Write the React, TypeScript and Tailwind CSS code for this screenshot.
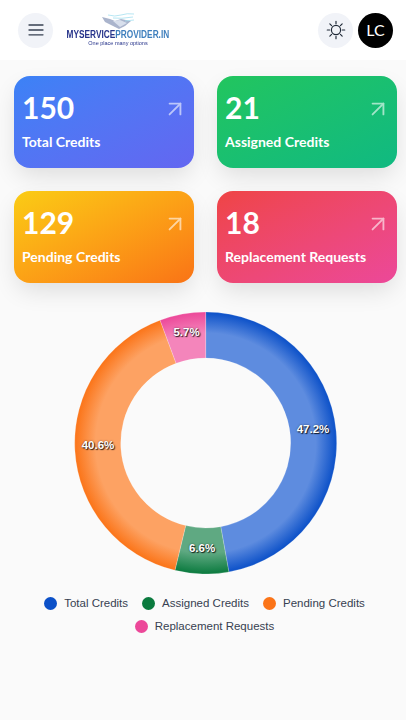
import React from 'react'
import { ArrowUpRight } from 'lucide-react'

const cards = [
  { value: '150', label: 'Total Credits', bg: 'bg-gradient-to-br from-[#3b82f6] to-[#6366f1]' },
  { value: '21', label: 'Assigned Credits', bg: 'bg-gradient-to-br from-[#22c55e] to-[#10b981]' },
  { value: '129', label: 'Pending Credits', bg: 'bg-gradient-to-br from-[#facc15] to-[#f97316]' },
  { value: '18', label: 'Replacement Requests', bg: 'bg-gradient-to-br from-[#ef4444] to-[#ec4899]' },
]

const slices = [
  { id: 'blue', color: '#0b50c8', light: '#5e8cdf', value: 150, pct: '47.2%', lx: 313, ly: 429 },
  { id: 'green', color: '#0a7a3e', light: '#5fa982', value: 21, pct: '6.6%', lx: 202, ly: 548 },
  { id: 'orange', color: '#fb7418', light: '#fda263', value: 129, pct: '40.6%', lx: 98, ly: 445 },
  { id: 'pink', color: '#ec4899', light: '#f485bb', value: 18, pct: '5.7%', lx: 186.5, ly: 332 },
]

const legend = [
  { label: 'Total Credits', color: 'bg-[#0b50c8]' },
  { label: 'Assigned Credits', color: 'bg-[#0a7a3e]' },
  { label: 'Pending Credits', color: 'bg-[#fb7418]' },
  { label: 'Replacement Requests', color: 'bg-[#ec4899]' },
]

// center of the ring inside the 290x264 svg
const cx = 145.7
const cy = 133
const outer = 131
const inner = 85

function arc(start: number, end: number) {
  const pt = (r: number, a: number) => {
    const rad = ((a - 90) * Math.PI) / 180
    return `${(cx + r * Math.cos(rad)).toFixed(2)} ${(cy + r * Math.sin(rad)).toFixed(2)}`
  }
  const large = end - start > 180 ? 1 : 0
  return `M${pt(outer, start)} A${outer} ${outer} 0 ${large} 1 ${pt(outer, end)} L${pt(inner, end)} A${inner} ${inner} 0 ${large} 0 ${pt(inner, start)} Z`
}

const Donut = () => {
  const total = slices.reduce((s, x) => s + x.value, 0)
  let angle = 0
  return (
    <svg width="290" height="264" viewBox="0 0 290 264" className="block">
      <defs>
        {slices.map((s) => (
          <radialGradient key={s.id} id={s.id} gradientUnits="userSpaceOnUse" cx={cx} cy={cy} r={outer}>
            <stop offset="0.65" stopColor={s.light} />
            <stop offset="0.84" stopColor={s.light} />
            <stop offset="1" stopColor={s.color} />
          </radialGradient>
        ))}
      </defs>
      {slices.map((s) => {
        const start = angle
        angle += (s.value / total) * 360
        return <path key={s.id} d={arc(start, angle)} fill={`url(#${s.id})`} stroke="#ffffff" strokeOpacity="0.4" strokeWidth="0.5" />
      })}
      {slices.map((s) => (
        <text
          key={s.id}
          x={s.lx - 60}
          y={s.ly - 310 + 4}
          textAnchor="middle"
          fill="#ffffff"
          fontSize="11.5"
          fontWeight="700"
          fontFamily="'Liberation Sans', sans-serif"
          style={{ textShadow: '1px 1px 1px rgba(0,0,0,0.8), 0 0 2px rgba(0,0,0,0.5)' }}
        >
          {s.pct}
        </text>
      ))}
    </svg>
  )
}

const Hamburger = () => (
  <svg width="16" height="12" viewBox="0 0 16 12" fill="none" stroke="#374151" strokeWidth="1.3" strokeLinecap="round">
    <path d="M1 1h14M1 6h14M1 10.8h14" />
  </svg>
)

const Sun = () => (
  <svg width="20" height="20" viewBox="0 0 24 24" fill="none" stroke="#1f2937" strokeWidth="1.4" strokeLinecap="round">
    <circle cx="12" cy="12" r="5.5" />
    <path d="M12 1.5v3M12 19.5v3M1.5 12h3M19.5 12h3M4.6 4.6l2.1 2.1M17.3 17.3l2.1 2.1M4.6 19.4l2.1-2.1M17.3 6.7l2.1-2.1" />
  </svg>
)

const Logo = () => (
  <div className="flex flex-col items-center w-[104px] blur-[0.3px]">
    <svg width="34" height="16" viewBox="0 0 34 16" className="mb-[1px]">
      <path d="M1 4 L9 6 L14 8 L20 6 L30 8 L24 13 L18 16 L12 13 L4 9 Z" fill="#aab4cc" />
      <path d="M12 8 L19 7 L26 10 L19 14 Z" fill="#d8dfec" />
      <path d="M7 2 Q14 4 20 2 T33 1 M12 5 Q20 6 32 4 M24 8 L33 7" stroke="#a5dff0" strokeWidth="0.8" fill="none" />
    </svg>
    <div className="font-['Liberation_Sans',sans-serif] font-bold text-[10px] leading-[10px] scale-x-[0.83] whitespace-nowrap">
      <span className="text-[#27348b]">MYSERVICE</span>
      <span className="text-[#3f7fbd]">PROVIDER.IN</span>
    </div>
    <div className="font-['Liberation_Sans',sans-serif] text-[5.5px] leading-[7px] text-[#27348b] whitespace-nowrap">One place many options</div>
  </div>
)

const App = () => {
  return (
    <div className="w-[406px] h-[720px] bg-[#fafafa] overflow-hidden font-['Lato',sans-serif]">
      <header className="h-[60px] bg-white flex items-center justify-between pl-[18px] pr-[13px]">
        <div className="flex items-center gap-[13px]">
          <button className="w-[35px] h-[35px] rounded-full bg-[#f1f3f8] flex items-center justify-center">
            <Hamburger />
          </button>
          <Logo />
        </div>
        <div className="flex items-center gap-[5px]">
          <button className="w-[35px] h-[35px] rounded-full bg-[#f1f3f8] flex items-center justify-center">
            <Sun />
          </button>
          <div className="w-[35px] h-[35px] rounded-full bg-black text-white flex items-center justify-center text-[16px]">
            LC
          </div>
        </div>
      </header>

      <main className="pt-4">
        <div className="grid grid-cols-[180px_180px] gap-x-[23px] gap-y-[23px] pl-[14px]">
          {cards.map((c) => (
            <div key={c.label} className={`h-[92px] rounded-[16px] pl-[8px] pr-[6px] pt-[12px] text-white shadow-[0_10px_25px_-3px_rgba(0,0,0,0.12)] ${c.bg}`}>
              <div className="flex items-center justify-between">
                <span className="text-[30px] leading-[38px] font-bold">{c.value}</span>
                <ArrowUpRight size={26} strokeWidth={1.7} className="opacity-60 mt-[3px]" />
              </div>
              <div className="mt-[6px] text-[14px] leading-[20px] font-bold">{c.label}</div>
            </div>
          ))}
        </div>

        <div className="mt-[27px] pl-[60px]">
          <Donut />
        </div>

        <div className="mt-[21px] flex flex-wrap justify-center gap-x-[14px] gap-y-[7px] pl-[23px] pr-[20px] font-['Liberation_Sans',sans-serif] text-[11.5px] leading-[16px] text-[#374151]">
          {legend.map((l) => (
            <div key={l.label} className="flex items-center gap-[7px]">
              <span className={`w-[13px] h-[13px] rounded-full ${l.color}`} />
              <span>{l.label}</span>
            </div>
          ))}
        </div>
      </main>
    </div>
  )
}

export default App
